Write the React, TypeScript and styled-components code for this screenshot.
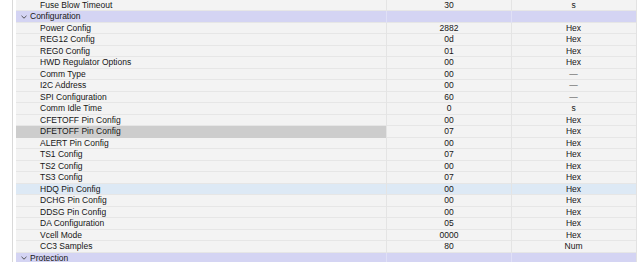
import React from "react";
import styled, { createGlobalStyle } from "styled-components";

const Global = createGlobalStyle`
  html, body { margin: 0; padding: 0; background: #ffffff; overflow: hidden; }
  #root { width: 640px; height: 262px; overflow: hidden; }
`;

type Row =
  | { kind: "header"; name: string }
  | { kind: "item"; name: string; value: string; unit: string; state?: "selected" | "hover" };

const rows: Row[] = [
  { kind: "item", name: "Fuse Blow Timeout", value: "30", unit: "s" },
  { kind: "header", name: "Configuration" },
  { kind: "item", name: "Power Config", value: "2882", unit: "Hex" },
  { kind: "item", name: "REG12 Config", value: "0d", unit: "Hex" },
  { kind: "item", name: "REG0 Config", value: "01", unit: "Hex" },
  { kind: "item", name: "HWD Regulator Options", value: "00", unit: "Hex" },
  { kind: "item", name: "Comm Type", value: "00", unit: "—" },
  { kind: "item", name: "I2C Address", value: "00", unit: "—" },
  { kind: "item", name: "SPI Configuration", value: "60", unit: "—" },
  { kind: "item", name: "Comm Idle Time", value: "0", unit: "s" },
  { kind: "item", name: "CFETOFF Pin Config", value: "00", unit: "Hex" },
  { kind: "item", name: "DFETOFF Pin Config", value: "07", unit: "Hex", state: "selected" },
  { kind: "item", name: "ALERT Pin Config", value: "00", unit: "Hex" },
  { kind: "item", name: "TS1 Config", value: "07", unit: "Hex" },
  { kind: "item", name: "TS2 Config", value: "00", unit: "Hex" },
  { kind: "item", name: "TS3 Config", value: "07", unit: "Hex" },
  { kind: "item", name: "HDQ Pin Config", value: "00", unit: "Hex", state: "hover" },
  { kind: "item", name: "DCHG Pin Config", value: "00", unit: "Hex" },
  { kind: "item", name: "DDSG Pin Config", value: "00", unit: "Hex" },
  { kind: "item", name: "DA Configuration", value: "05", unit: "Hex" },
  { kind: "item", name: "Vcell Mode", value: "0000", unit: "Hex" },
  { kind: "item", name: "CC3 Samples", value: "80", unit: "Num" },
  { kind: "header", name: "Protection" },
];

const Page = styled.div`
  display: flex;
  width: 640px;
  height: 262px;
  background: #ffffff;
  font-family: "Liberation Sans", Arial, sans-serif;
  font-size: 8.5px;
  color: #161616;
`;

const Gutter = styled.div`
  width: 12px;
  flex: none;
  border-right: 1px solid #d9d9d9;
  margin-right: 3px;
`;

const Table = styled.div`
  width: 620px;
  flex: none;
  margin-top: -0.5px;
  display: flex;
  flex-direction: column;
  border-right: 1px solid #e2e2e2;
`;

const RowLine = styled.div<{ $bg: string }>`
  display: grid;
  grid-template-columns: 371px 125px 123px;
  height: 11.5px;
  line-height: 11.5px;
  box-sizing: border-box;
  border-bottom: 1px solid #e6e6e6;
  background: ${(p) => p.$bg};
`;

const NameCell = styled.div<{ $selected?: boolean }>`
  padding-left: 24px;
  white-space: nowrap;
  border-right: 1px solid #e4e4e4;
  background: ${(p) => (p.$selected ? "#cdcdcd" : "transparent")};
`;

const CenterCell = styled.div<{ $muted?: boolean; $border?: boolean }>`
  text-align: center;
  white-space: nowrap;
  color: ${(p) => (p.$muted ? "#4a4a4a" : "#161616")};
  border-right: ${(p) => (p.$border ? "1px solid #e4e4e4" : "none")};
`;

const HeaderName = styled.div`
  display: flex;
  align-items: center;
  gap: 3px;
  padding-left: 5px;
  white-space: nowrap;
  border-right: 1px solid #e0e0f6;
`;

const HeaderBlank = styled.div<{ $border?: boolean }>`
  border-right: ${(p) => (p.$border ? "1px solid #e0e0f6" : "none")};
`;

const Chevron = () => (
  <svg width="6" height="4" viewBox="0 0 6 4" style={{ display: "block" }}>
    <path d="M0.5 0.8 L3 3.2 L5.5 0.8" fill="none" stroke="#444" strokeWidth="0.9" />
  </svg>
);

export default function App() {
  return (
    <>
      <Global />
      <Page>
        <Gutter />
        <Table>
          {rows.map((r, i) =>
            r.kind === "header" ? (
              <RowLine key={i} $bg="#d4d4f3">
                <HeaderName>
                  <Chevron />
                  <span>{r.name}</span>
                </HeaderName>
                <HeaderBlank $border />
                <HeaderBlank />
              </RowLine>
            ) : (
              <RowLine key={i} $bg={r.state === "hover" ? "#dde9f5" : "#f3f3f3"}>
                <NameCell $selected={r.state === "selected"}>{r.name}</NameCell>
                <CenterCell $border>{r.value}</CenterCell>
                <CenterCell $muted={r.unit === "—"}>{r.unit}</CenterCell>
              </RowLine>
            )
          )}
        </Table>
      </Page>
    </>
  );
}
